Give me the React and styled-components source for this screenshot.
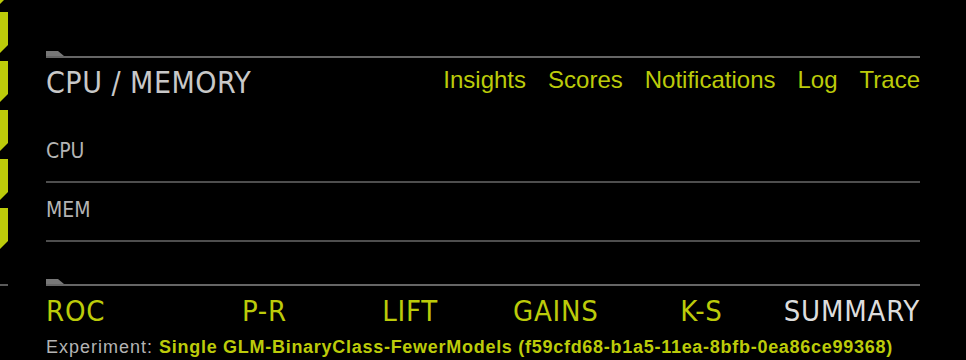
import React from 'react';
import styled, { createGlobalStyle } from 'styled-components';

const GlobalStyle = createGlobalStyle`
  html, body {
    margin: 0;
    padding: 0;
    background: #000;
    overflow: hidden;
  }
  body {
    font-family: "Liberation Sans", Arial, sans-serif;
  }
`;

const YELLOW = '#bccb0a';
const NARROW = '"DejaVu Sans Condensed", "Liberation Sans", sans-serif';

const navLinks = ['Insights', 'Scores', 'Notifications', 'Log', 'Trace'];
const metrics = ['CPU', 'MEM'];
const graphTabs = [
  { label: 'ROC' },
  { label: 'P-R' },
  { label: 'LIFT' },
  { label: 'GAINS' },
  { label: 'K-S' },
  { label: 'SUMMARY', active: true },
];

function App() {
  return (
    <Page>
      <GlobalStyle />
      <Rail>
        {[0, 1, 2, 3, 4, 5].map((i) => (
          <RailTab key={i} />
        ))}
        <RailRule />
      </Rail>

      <Main>
        <SectionRule />
        <Header>
          <Heading>CPU / MEMORY</Heading>
          <Nav>
            {navLinks.map((l) => (
              <NavLink key={l}>{l}</NavLink>
            ))}
          </Nav>
        </Header>

        <Metrics>
          {metrics.map((m) => (
            <MetricRow key={m}>
              <MetricLabel>{m}</MetricLabel>
            </MetricRow>
          ))}
        </Metrics>

        <SectionRule $gap={37} />
        <GraphTabs>
          {graphTabs.map((t, i) => (
            <GraphTab
              key={t.label}
              $active={t.active}
              $align={i === 0 ? 'start' : i === graphTabs.length - 1 ? 'end' : 'center'}
            >
              {t.label}
            </GraphTab>
          ))}
        </GraphTabs>

        <Experiment>
          Experiment: <ExperimentName>Single GLM-BinaryClass-FewerModels (f59cfd68-b1a5-11ea-8bfb-0ea86ce99368)</ExperimentName>
        </Experiment>
      </Main>
    </Page>
  );
}

export default App;

const Page = styled.div`
  display: flex;
  width: 966px;
  height: 360px;
  background: #000;
  overflow: hidden;
`;

const Rail = styled.div`
  display: flex;
  flex-direction: column;
  gap: 8px;
  width: 8px;
  margin-top: -37px;
  flex-shrink: 0;
`;

const RailTab = styled.div`
  height: 41px;
  background: ${YELLOW};
  clip-path: polygon(0 0, 100% 0, 100% calc(100% - 8px), 0 100%);
`;

const RailRule = styled.div`
  margin-top: 27px;
  height: 2px;
  background: #5a5a5a;
`;

const Main = styled.div`
  flex: 1;
  display: flex;
  flex-direction: column;
  padding: 51px 46px 0 38px;
`;

const SectionRule = styled.div`
  margin-top: ${(p) => p.$gap || 0}px;
  border-bottom: 2px solid #666;

  &::before {
    content: '';
    display: block;
    width: 18px;
    height: 5px;
    background: #777;
    clip-path: polygon(0 0, 12px 0, 100% 100%, 0 100%);
  }
`;

const Header = styled.div`
  display: flex;
  justify-content: space-between;
  align-items: flex-start;
  margin-top: 9.5px;
`;

const Heading = styled.h1`
  margin: 0;
  font-family: ${NARROW};
  font-weight: 400;
  font-size: 30px;
  line-height: 30px;
  letter-spacing: 0.5px;
  color: #c8c8c8;
`;

const Nav = styled.nav`
  display: flex;
  gap: 22px;
`;

const NavLink = styled.a`
  font-size: 24px;
  line-height: 24px;
  color: ${YELLOW};
  cursor: pointer;
`;

const Metrics = styled.div`
  display: flex;
  flex-direction: column;
  margin-top: 26.5px;
`;

const MetricRow = styled.div`
  padding: 17px 0 19px;
  border-bottom: 2px solid #4e4e4e;
`;

const MetricLabel = styled.span`
  display: block;
  font-family: ${NARROW};
  font-size: 21px;
  line-height: 21px;
  color: #b4b4b4;
`;

const GraphTabs = styled.div`
  display: grid;
  grid-template-columns: repeat(6, 1fr);
  margin-top: 10.5px;
`;

const GraphTab = styled.div`
  justify-self: ${(p) => p.$align};
  font-family: ${NARROW};
  font-size: 29px;
  line-height: 29px;
  letter-spacing: 0.8px;
  color: ${(p) => (p.$active ? '#dddddd' : YELLOW)};
  cursor: pointer;
`;

const Experiment = styled.div`
  margin-top: 12px;
  font-size: 18px;
  line-height: 18px;
  letter-spacing: 1px;
  color: #b4b4b4;
  white-space: nowrap;
`;

const ExperimentName = styled.span`
  color: ${YELLOW};
  font-weight: 700;
  letter-spacing: 0.72px;
`;
